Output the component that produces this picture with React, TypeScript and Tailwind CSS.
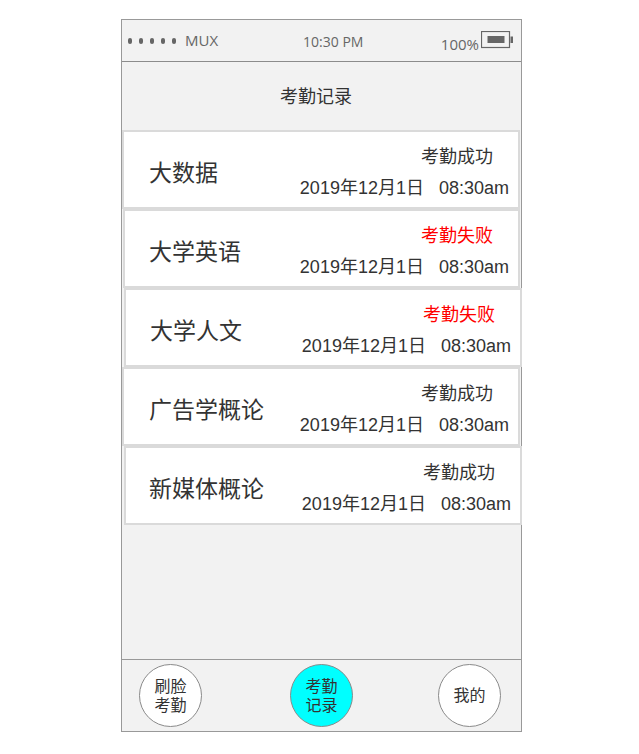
import React from "react";

const records = [
  { name: "大数据", ok: true, shift: "ml-0 w-[398px] pl-[25px]" },
  { name: "大学英语", ok: false, shift: "ml-[1px] w-[397px] pl-[24px]" },
  { name: "大学人文", ok: false, shift: "ml-[2px] w-[398px] pl-[24px]" },
  { name: "广告学概论", ok: true, shift: "ml-0 w-[398px] pl-[25px]" },
  { name: "新媒体概论", ok: true, shift: "ml-[2px] w-[398px] pl-[23px]" },
];

const cjk = "font-['Liberation_Sans','Noto_Sans_CJK_SC',sans-serif]";

function Battery() {
  return (
    <svg width="33" height="18" viewBox="0 0 33 18" className="block">
      <rect x="0.5" y="0.5" width="28" height="16" fill="none" stroke="#666" strokeWidth="1.2" />
      <rect x="6.5" y="5" width="17" height="7" fill="#666" />
      <rect x="29.5" y="5.5" width="2.5" height="6.5" fill="#666" />
    </svg>
  );
}

function RecordCard({ name, ok, shift }: { name: string; ok: boolean; shift: string }) {
  return (
    <div className={`${shift} h-[79px] border-2 border-[#dadada] bg-white flex items-center justify-between pr-[9px]`}>
      <div className="pt-[7px] text-[23px] text-[#333] leading-[30px]">{name}</div>
      <div className="pt-[6px] flex flex-col items-end">
        <div className={`mr-[16px] text-[18px] leading-[24px] ${ok ? "text-[#333]" : "text-[#ff0000]"}`}>
          {ok ? "考勤成功" : "考勤失败"}
        </div>
        <div className="mt-[7px] text-[18px] leading-[24px] text-[#333] whitespace-pre">
          2019年12月1日   08:30am
        </div>
      </div>
    </div>
  );
}

function NavCircle({ label, active }: { label: string[]; active?: boolean }) {
  return (
    <div
      className={`w-[63px] h-[63px] rounded-full border border-[#8a8a8a] flex flex-col items-center justify-center text-[16px] leading-[19px] text-[#333] ${
        active ? "bg-[#00ffff]" : "bg-white"
      }`}
    >
      {label.map((l) => (
        <span key={l}>{l}</span>
      ))}
    </div>
  );
}

export default function App() {
  return (
    <div className={`min-h-[754px] bg-white pt-[19px] pl-[121px] ${cjk}`}>
      <div className="w-[401px] h-[713px] border border-[#999] bg-[#f2f2f2] flex flex-col">
        {/* status bar */}
        <div className="h-[42px] border-b border-[#8c8c8c] flex items-center pl-[6px] pr-[7px] text-[#666] font-['Open_Sans','Liberation_Sans',sans-serif]">
          <div className="flex items-center gap-[7px]">
            <span className="w-[4px] h-[6px] rounded-full bg-[#666]" />
            <span className="w-[4px] h-[6px] rounded-full bg-[#666]" />
            <span className="w-[4px] h-[6px] rounded-full bg-[#666]" />
            <span className="w-[4px] h-[6px] rounded-full bg-[#666]" />
            <span className="w-[4px] h-[6px] rounded-full bg-[#666]" />
          </div>
          <span className="ml-[9px] text-[15px] leading-none">MUX</span>
          <span className="ml-[85px] text-[14px] leading-none mt-[2px]">10:30 PM</span>
          <div className="ml-auto flex items-center">
            <span className="text-[15px] leading-none mt-[8px]">100%</span>
            <span className="ml-[2px] mt-[-2px]">
              <Battery />
            </span>
          </div>
        </div>

        {/* title */}
        <div className="h-[68px] flex items-center justify-center pt-[3px] pr-[11px] text-[18px] text-[#333]">考勤记录</div>

        {/* list */}
        <div className="flex flex-col">
          {records.map((r) => (
            <RecordCard key={r.name} {...r} />
          ))}
        </div>

        <div className="flex-1" />

        {/* bottom nav */}
        <div className="h-[72px] border-t border-[#999] flex items-center pl-[17px]">
          <NavCircle label={["刷脸", "考勤"]} />
          <div className="ml-[88px]">
            <NavCircle label={["考勤", "记录"]} active />
          </div>
          <div className="ml-[85px]">
            <NavCircle label={["我的"]} />
          </div>
        </div>
      </div>
    </div>
  );
}
